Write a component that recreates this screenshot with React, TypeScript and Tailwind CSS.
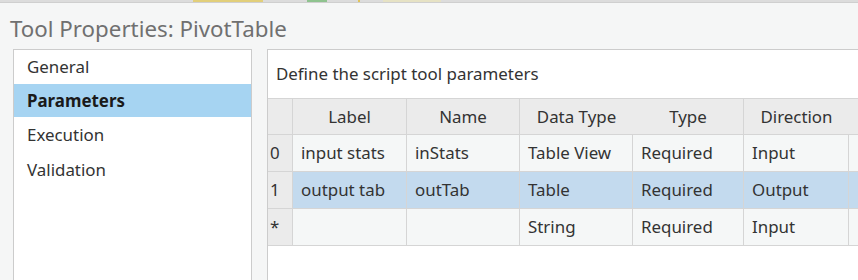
import React from "react";

const F = { fontFamily: '"Noto Sans", "Open Sans", sans-serif' };

const rows = [
  { idx: "0", label: "input stats", name: "inStats", dt: "Table View", type: "Required", dir: "Input", sel: false },
  { idx: "1", label: "output tab", name: "outTab", dt: "Table", type: "Required", dir: "Output", sel: true },
  { idx: "*", label: "", name: "", dt: "String", type: "Required", dir: "Input", sel: false },
];

export default function App() {
  return (
    <div className="w-[858px] h-[280px] overflow-hidden bg-[#f5f6f6] text-[#333333] flex flex-col" style={F}>
      {/* top strip */}
      <div className="h-[3px] bg-[#dcdcdc] border-b border-[#cfcfcf] flex shrink-0">
        <div className="w-[193px]" />
        <div className="w-[70px] h-[2px] bg-[#e2cf7a]" />
        <div className="w-[44px]" />
        <div className="w-[20px] h-[2px] bg-[#8fc38f]" />
        <div className="w-[31px]" />
        <div className="w-[2px] h-[2px] bg-[#e2c45a]" />
        <div className="w-[23px]" />
        <div className="w-[58px] h-[2px] bg-[#e6e2c4]" />
      </div>
      <div className="pl-[10px] pt-[11px] h-[46px] text-[22.3px] leading-[30px] text-[#707070] shrink-0">
        Tool Properties: PivotTable
      </div>
      <div className="flex flex-1 min-h-0 pl-[13px] gap-[15px] text-[16.9px]">
        {/* left nav */}
        <div className="w-[239px] bg-white border border-[#cccccc] border-b-0 shrink-0">
          <div className="h-[34px] pl-[13px] flex items-center">General</div>
          <div className="h-[33px] pl-[13px] flex items-center bg-[#a6d4f2] font-bold text-[#1a1a1a]">Parameters</div>
          <div className="h-[35px] pl-[13px] flex items-center">Execution</div>
          <div className="h-[35px] pl-[13px] flex items-center">Validation</div>
        </div>
        {/* right panel */}
        <div className="w-[620px] bg-white border border-[#cccccc] border-b-0 shrink-0">
          <div className="h-[48px] pl-[8px] flex items-center">Define the script tool parameters</div>
          <div className="border-t border-[#d5d5d5]">
            {/* header */}
            <div className="flex h-[36px] bg-[#ebebeb] border-b border-[#d5d5d5]">
              <div className="w-[25px] border-r border-[#d5d5d5]" />
              <div className="w-[114px] border-r border-[#d5d5d5] flex items-center justify-center">Label</div>
              <div className="w-[113px] border-r border-[#d5d5d5] flex items-center justify-center">Name</div>
              <div className="w-[113px] flex items-center justify-center">Data Type</div>
              <div className="w-[111px] border-r border-[#d5d5d5] flex items-center justify-center">Type</div>
              <div className="w-[105px] flex items-center justify-center">Direction</div>
              <div className="flex-1" />
            </div>
            {rows.map((r) => {
              const bg = r.sel ? "bg-[#c3daee]" : "bg-[#f5f7f7]";
              return (
                <div key={r.idx} className={`flex h-[37px] border-b border-[#d5d5d5] ${bg}`}>
                  <div className="w-[25px] border-r border-[#d5d5d5] bg-[#ebebeb] flex items-center pl-[2px]">{r.idx}</div>
                  <div className="w-[114px] border-r border-[#d5d5d5] flex items-center pl-[8px]">{r.label}</div>
                  <div className="w-[113px] border-r border-[#d5d5d5] flex items-center pl-[8px]">{r.name}</div>
                  <div className="w-[113px] border-r border-[#d5d5d5] flex items-center pl-[8px]">{r.dt}</div>
                  <div className="w-[111px] border-r border-[#d5d5d5] flex items-center pl-[8px]">{r.type}</div>
                  <div className="w-[105px] border-r border-[#d5d5d5] flex items-center pl-[8px]">{r.dir}</div>
                  <div className="flex-1" />
                </div>
              );
            })}
          </div>
        </div>
      </div>
    </div>
  );
}
